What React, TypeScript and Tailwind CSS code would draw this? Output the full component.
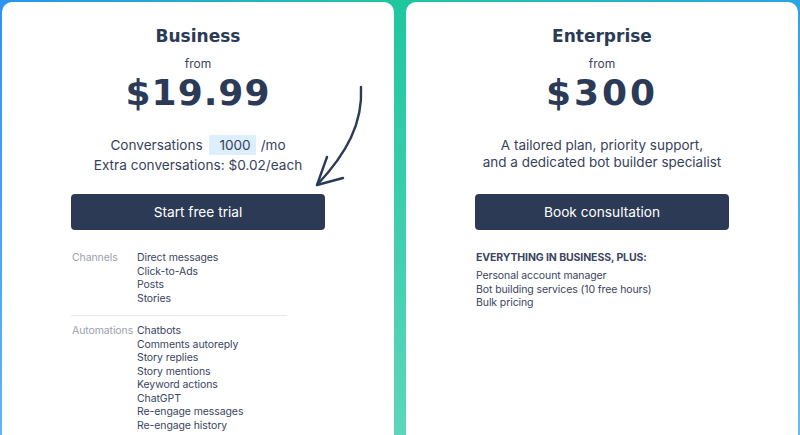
import React from "react";

const channels = ["Direct messages", "Click-to-Ads", "Posts", "Stories"];
const automations = [
  "Chatbots",
  "Comments autoreply",
  "Story replies",
  "Story mentions",
  "Keyword actions",
  "ChatGPT",
  "Re-engage messages",
  "Re-engage history",
];

function Arrow() {
  return (
    <svg
      className="absolute left-[310px] top-[81px]"
      width="56"
      height="108"
      viewBox="0 0 56 108"
      fill="none"
    >
      <path
        d="M49 4 C51 40, 35 70, 5 102"
        stroke="#2b3a57"
        strokeWidth="2.4"
        strokeLinecap="round"
      />
      <path
        d="M15 74 L5 102 L31 95"
        stroke="#2b3a57"
        strokeWidth="2.4"
        strokeLinecap="round"
        strokeLinejoin="round"
      />
    </svg>
  );
}

function FeatureGroup({ label, items }: { label: string; items: string[] }) {
  return (
    <div className="flex">
      <div className="w-[66px] shrink-0 pl-[1px] text-[#9aa1ad]">{label}</div>
      <div className="flex flex-col text-[#3a4561]">
        {items.map((i) => (
          <div key={i}>{i}</div>
        ))}
      </div>
    </div>
  );
}

export default function App() {
  return (
    <div className="h-[435px] w-[800px] overflow-hidden bg-[linear-gradient(to_bottom,rgba(255,255,255,0),rgba(255,255,255,0.28)),linear-gradient(90deg,#2b94f3_0%,#1ec79e_50%,#2aa5e6_100%)] font-['Inter',sans-serif]">
      <div className="flex gap-[12px] px-[2px] pt-[2px]">
        {/* Business */}
        <div className="relative flex h-[480px] w-[392px] flex-col items-center rounded-[10px] bg-white pt-6">
          <Arrow />
          <div className="font-['DejaVu_Sans',sans-serif] text-[17px] font-bold leading-[20px] text-[#2b3a57]">
            Business
          </div>
          <div className="mt-[10px] text-[12px] leading-[16px] text-[#3a4561]">from</div>
          <div className="mt-[1px] font-['DejaVu_Sans',sans-serif] text-[36px] font-bold leading-[40px] tracking-[1px] text-[#2b3a57]">
            $19.99
          </div>
          <div className="mt-[22px] flex h-[20px] items-center text-[13.6px] leading-[20px] text-[#36425c]">
            <span>Conversations</span>
            <span className="ml-[6px] mr-[5px] inline-block h-[20px] w-[47px] bg-[#ddeefd] pr-[5px] text-right">
              1000
            </span>
            <span>/mo</span>
          </div>
          <div className="text-[13.6px] leading-[20px] text-[#36425c]">
            Extra conversations: $0.02/each
          </div>
          <button className="mt-[19px] flex h-[36px] w-[254px] items-center justify-center rounded-[4px] bg-[#2d3a56] text-[13.7px] text-white">
            Start free trial
          </button>
          <div className="mt-[21px] w-[254px] text-[10.5px] leading-[13.5px] tracking-[-0.1px]">
            <FeatureGroup label="Channels" items={channels} />
            <div className="mt-[9.5px] w-[216px] border-t border-[#e6e8ec]" />
            <div className="mt-[8.5px]">
              <FeatureGroup label="Automations" items={automations} />
            </div>
          </div>
        </div>

        {/* Enterprise */}
        <div className="flex h-[480px] w-[392px] flex-col items-center rounded-[10px] bg-white pt-6">
          <div className="font-['DejaVu_Sans',sans-serif] text-[17px] font-bold leading-[20px] text-[#2b3a57]">
            Enterprise
          </div>
          <div className="mt-[10px] text-[12px] leading-[16px] text-[#3a4561]">from</div>
          <div className="mt-[1px] font-['DejaVu_Sans',sans-serif] text-[36px] font-bold leading-[40px] tracking-[3px] text-[#2b3a57]">
            $300
          </div>
          <div className="mt-[24px] text-center text-[13.5px] leading-[17px] text-[#36425c]">
            <div>A tailored plan, priority support,</div>
            <div>and a dedicated bot builder specialist</div>
          </div>
          <button className="mt-[23px] flex h-[36px] w-[254px] items-center justify-center rounded-[4px] bg-[#2d3a56] text-[13.7px] text-white">
            Book consultation
          </button>
          <div className="mt-[21px] w-[254px] text-[10.5px] leading-[13.5px] tracking-[-0.1px]">
            <div className="pl-[1px] font-bold text-[#3a4561]">EVERYTHING IN BUSINESS, PLUS:</div>
            <div className="mt-[4.5px] flex flex-col pl-[1px] text-[#3a4561]">
              <div>Personal account manager</div>
              <div>Bot building services (10 free hours)</div>
              <div>Bulk pricing</div>
            </div>
          </div>
        </div>
      </div>
    </div>
  );
}
